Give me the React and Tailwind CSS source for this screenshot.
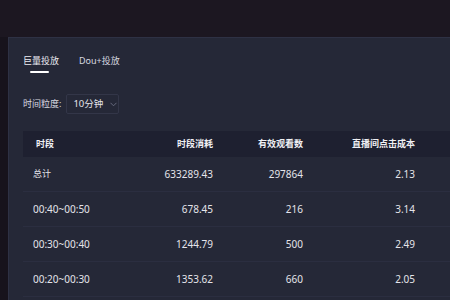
import React from "react";

const rows = [
  ["总计", "633289.43", "297864", "2.13"],
  ["00:40~00:50", "678.45", "216", "3.14"],
  ["00:30~00:40", "1244.79", "500", "2.49"],
  ["00:20~00:30", "1353.62", "660", "2.05"],
];

export default function App() {
  return (
    <div
      className="w-[450px] h-[300px] overflow-hidden bg-[#1b1620] flex flex-col"
      style={{ fontFamily: '"Noto Sans", "Noto Sans CJK SC", sans-serif' }}
    >
      <div className="h-[37px] shrink-0 bg-[#1c1721]" />
      <div className="flex-1 flex">
        <div className="w-[8px] shrink-0 bg-[#17131c]" />
        <div className="flex-1 bg-[#252837] border-t border-l border-[#2e3144] pl-[14px] flex flex-col">
          <div className="flex items-center h-[44px] gap-[20px] pt-[2px] text-[9px] text-[#ececf2] whitespace-nowrap">
            <div className="relative">
              <span>巨量投放</span>
              <div className="absolute left-[7px] top-[17px] w-[19px] h-[2px] bg-white rounded" />
            </div>
            <span className="text-[#d8d9e0]">Dou+投放</span>
          </div>
          <div className="flex items-center h-[38px] pt-[6px] text-[9px] text-[#d8d9e0] whitespace-nowrap">
            <span>时间粒度:</span>
            <div className="ml-[5px] h-[20px] w-[53px] border border-[#333648] rounded-[2px] flex items-center pl-[6px] gap-[7px]">
              <span className="text-[9.5px] text-[#e6e6ec] whitespace-nowrap">10分钟</span>
              <svg width="7" height="5" viewBox="0 0 7 5" fill="none">
                <path d="M0.5 0.8 L3.5 3.8 L6.5 0.8" stroke="#6d7085" strokeWidth="0.9" />
              </svg>
            </div>
          </div>
          <div className="mt-[11px] text-[10px] whitespace-nowrap">
            <div className="flex items-center h-[26px] bg-[#1e2030] text-[9px] font-bold text-[#f0f0f4]">
              <div className="w-[110px] pl-[13px]">时段</div>
              <div className="w-[80px] text-right">时段消耗</div>
              <div className="w-[90px] text-right">有效观看数</div>
              <div className="w-[112px] text-right">直播间点击成本</div>
            </div>
            {rows.map((r, i) => (
              <div
                key={i}
                className="flex items-center h-[35px] border-b border-[#2b2e40] text-[#e4e4ea]"
              >
                <div className={"w-[110px] pl-[10px] " + (i === 0 ? "text-[9px]" : "")}>{r[0]}</div>
                <div className="w-[80px] text-right">{r[1]}</div>
                <div className="w-[90px] text-right">{r[2]}</div>
                <div className="w-[112px] text-right">{r[3]}</div>
              </div>
            ))}
          </div>
        </div>
      </div>
    </div>
  );
}
